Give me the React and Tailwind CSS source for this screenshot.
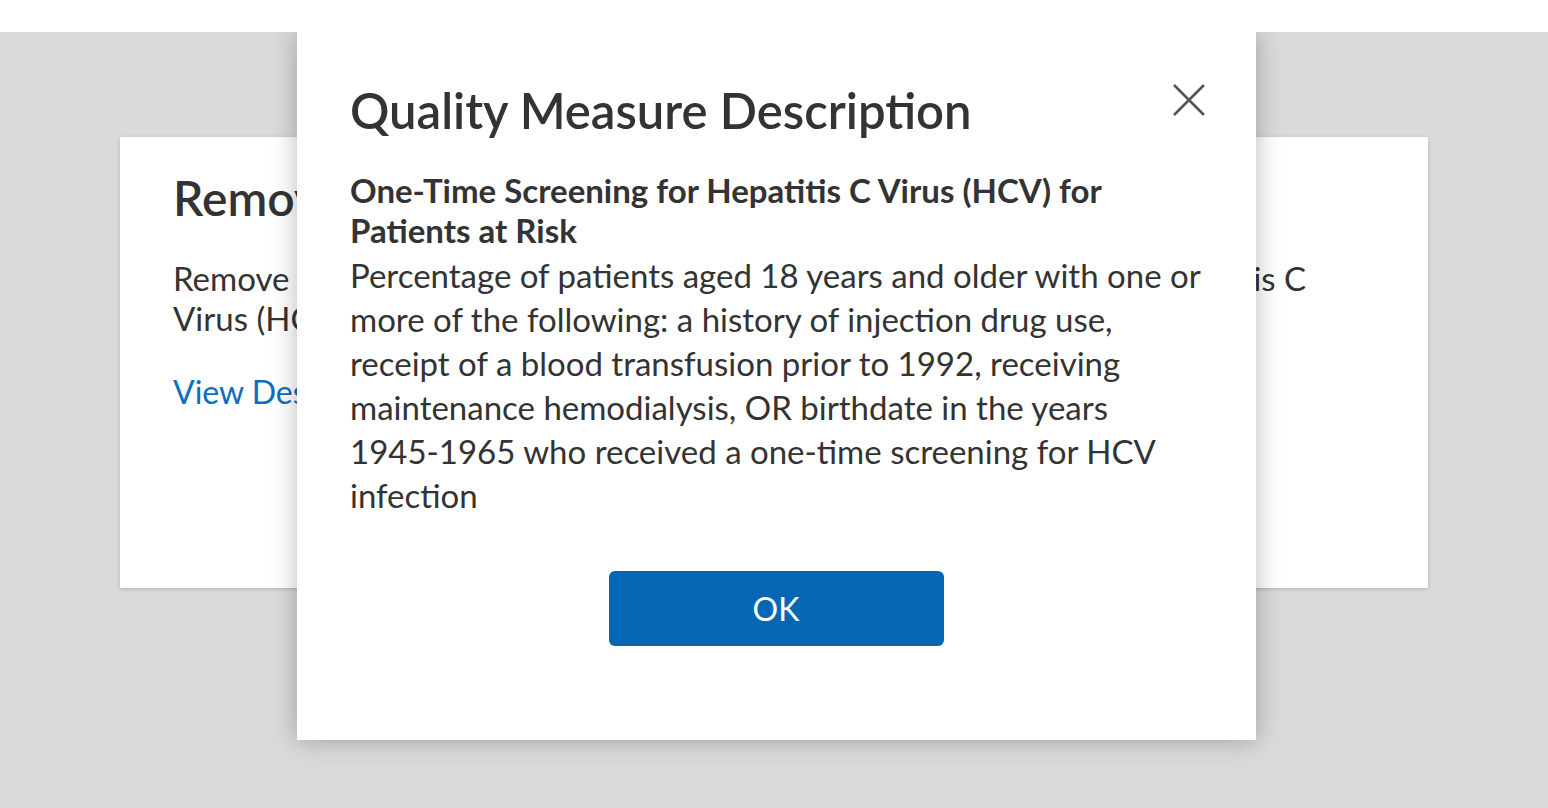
export default function App() {
  return (
    <div className="min-h-screen h-[808px] flex flex-col bg-white text-[#333] font-['Lato','Liberation_Sans',sans-serif]">
      <div className="h-[32px] shrink-0 bg-white" />

      <div className="relative flex-1 bg-[#dadada] overflow-hidden">
        {/* card behind the dialog */}
        <div className="ml-[120px] mt-[105px] w-[1308px] h-[451px] bg-white shadow-[0_1px_4px_rgba(0,0,0,0.18)] px-[53px] pt-[33px]">
          <h2 className="text-[48px] leading-[56px] font-semibold">
            Remove Measure
          </h2>
          <p className="mt-[32px] text-[33px] leading-[40px] whitespace-nowrap">
            Remove this quality measure from this list: One-Time Screening for Hepatitis C
            <br />
            Virus (HCV) for Patients at Risk?
          </p>
          <a href="#" className="block mt-[34px] text-[32px] leading-[40px] text-[#0a6ebd]">
            View Description
          </a>
        </div>

        {/* dialog */}
        <div className="absolute left-[297px] top-0 w-[959px] h-[708px] bg-white shadow-[0_0_24px_rgba(0,0,0,0.28)] pl-[53px] pr-[51px] pt-[50px]">
          <div className="flex items-start justify-between">
            <h1 className="text-[49px] leading-[56px] font-semibold">
              Quality Measure Description
            </h1>
            <button className="mt-[2px] text-[#555]">
              <svg width="32" height="32" viewBox="0 0 32 32" fill="none" stroke="currentColor" strokeWidth="2.6">
                <path d="M1 1 L31 31 M31 1 L1 31" />
              </svg>
            </button>
          </div>

          <h3 className="mt-[32px] text-[33px] leading-[40px] font-bold">
            One-Time Screening for Hepatitis C Virus (HCV) for
            <br />
            Patients at Risk
          </h3>
          <p className="mt-[3px] text-[33px] leading-[44px]">
            Percentage of patients aged 18 years and older with one or
            <br />
            more of the following: a history of injection drug use,
            <br />
            receipt of a blood transfusion prior to 1992, receiving
            <br />
            maintenance hemodialysis, OR birthdate in the years
            <br />
            1945-1965 who received a one-time screening for HCV
            <br />
            infection
          </p>

          <div className="mt-[54px] flex justify-center pr-[3px]">
            <button className="w-[335px] h-[75px] rounded-[6px] bg-[#0567b4] text-white text-[32px]">
              OK
            </button>
          </div>
        </div>
      </div>
    </div>
  );
}
